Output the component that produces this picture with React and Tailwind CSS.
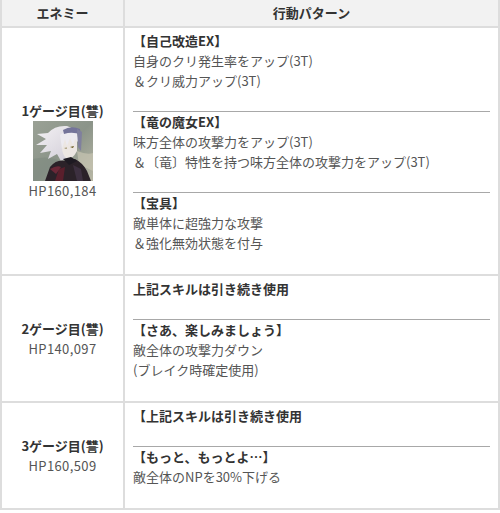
import React from "react";

function Avatar() {
  return (
    <svg width="60" height="60" viewBox="0 0 60 60" className="block">
      <defs>
        <linearGradient id="bg" x1="0" y1="0" x2="1" y2="1">
          <stop offset="0" stopColor="#9aa195" />
          <stop offset="0.5" stopColor="#8b9489" />
          <stop offset="1" stopColor="#b9b8a6" />
        </linearGradient>
        <linearGradient id="hair" x1="0" y1="0" x2="1" y2="1">
          <stop offset="0" stopColor="#f4f2f4" />
          <stop offset="1" stopColor="#cfcbd6" />
        </linearGradient>
      </defs>
      <rect width="60" height="60" fill="url(#bg)" />
      <path d="M0 38 Q15 34 28 40 L20 60 L0 60 Z" fill="#7e8a80" opacity="0.6" />
      <path d="M44 30 Q54 34 60 32 L60 50 Q52 46 46 44 Z" fill="#c7c4b2" opacity="0.7" />
      {/* hair back spikes */}
      <path d="M34 5 Q22 4 15 12 L4 13 L13 18 L3 24 L14 24 L7 32 L18 30 L15 38 L24 33 L28 40 L40 34 L44 18 Q42 7 34 5 Z" fill="url(#hair)" />
      {/* body armor */}
      <path d="M12 60 L17 46 Q24 38 32 40 L42 38 Q50 42 54 50 L58 60 Z" fill="#2b2229" />
      <path d="M22 60 L26 48 L32 46 L30 60 Z" fill="#5a1f2c" />
      <path d="M40 44 L48 48 L50 60 L44 60 Z" fill="#3d3040" />
      <path d="M17 48 Q24 44 28 46 L23 53 Z" fill="#6b2838" />
      {/* face */}
      <path d="M30 16 Q38 13 44 18 L44 30 Q40 38 34 38 Q29 34 29 26 Z" fill="#ece6e2" />
      {/* bangs */}
      <path d="M27 14 Q34 7 44 11 L46 22 L42 18 L40 24 L37 17 L34 25 L32 18 L29 28 Z" fill="#eceaf0" />
      {/* headpiece */}
      <path d="M30 9 Q38 4 47 8 L48 14 Q40 10 31 13 Z" fill="#74749a" />
      <path d="M44 8 L49 11 L48 30 L45 26 Z" fill="#80809e" />
      {/* eyes */}
      <path d="M37 26 L41 25 L40 27 Z" fill="#6a5a20" />
      <path d="M31 27 L34 26.5 L33.5 28 Z" fill="#6a5a20" opacity="0.7" />
      {/* collar */}
      <path d="M30 38 L38 36 L44 40 L36 44 Z" fill="#1e1a22" />
    </svg>
  );
}

function Hr() {
  return <div className="border-t border-[#a8a8a8]" />;
}

function Blank() {
  return <div className="h-[20px]" />;
}

function Head({ children }) {
  return <div className="font-bold text-[#333]">{children}</div>;
}

function Line({ children }) {
  return <div>{children}</div>;
}

function LeftCell({ title, hp, img }) {
  return (
    <div className="flex flex-col items-center justify-center border-r-2 border-b-2 border-[#dddddd] text-center">
      <div className="font-bold text-[#333]">{title}</div>
      {img && <Avatar />}
      <div className="text-[#555] tracking-[0.4px]">{hp}</div>
    </div>
  );
}

function RightCell({ children }) {
  return (
    <div className="border-r-2 border-b-2 border-[#dddddd] px-2 pt-[3px] pb-[1px]">
      {children}
    </div>
  );
}

export default function App() {
  return (
    <div className="w-[500px] h-[513px] bg-white text-[13px] leading-[20px] text-[#555] font-['Noto_Sans_CJK_JP','Noto_Sans',sans-serif]">
      <div className="grid grid-cols-[123px_1fr] border-l-2 border-[#dddddd]">
        <div className="h-[28px] bg-[#f2f2f2] border-r-2 border-b-2 border-[#dddddd] flex items-center justify-center font-bold text-[#333]">
          エネミー
        </div>
        <div className="h-[28px] bg-[#f2f2f2] border-r-2 border-b-2 border-[#dddddd] flex items-center justify-center font-bold text-[#333]">
          行動パターン
        </div>

        <LeftCell title="1ゲージ目(讐)" hp="HP160,184" img />
        <RightCell>
          <Head>【自己改造EX】</Head>
          <Line>自身のクリ発生率をアップ(3T)</Line>
          <Line>＆クリ威力アップ(3T)</Line>
          <Blank />
          <Hr />
          <Head>【竜の魔女EX】</Head>
          <Line>味方全体の攻撃力をアップ(3T)</Line>
          <Line>＆〔竜〕特性を持つ味方全体の攻撃力をアップ(3T)</Line>
          <Blank />
          <Hr />
          <Head>【宝具】</Head>
          <Line>敵単体に超強力な攻撃</Line>
          <Line>＆強化無効状態を付与</Line>
          <Blank />
        </RightCell>

        <LeftCell title="2ゲージ目(讐)" hp="HP140,097" />
        <RightCell>
          <Head>上記スキルは引き続き使用</Head>
          <Blank />
          <Hr />
          <Head>【さあ、楽しみましょう】</Head>
          <Line>敵全体の攻撃力ダウン</Line>
          <Line>(ブレイク時確定使用)</Line>
          <Blank />
        </RightCell>

        <LeftCell title="3ゲージ目(讐)" hp="HP160,509" />
        <RightCell>
          <Head>【上記スキルは引き続き使用</Head>
          <Blank />
          <Hr />
          <Head>【もっと、もっとよ…】</Head>
          <Line>敵全体のNPを30%下げる</Line>
          <Blank />
        </RightCell>
      </div>
    </div>
  );
}
